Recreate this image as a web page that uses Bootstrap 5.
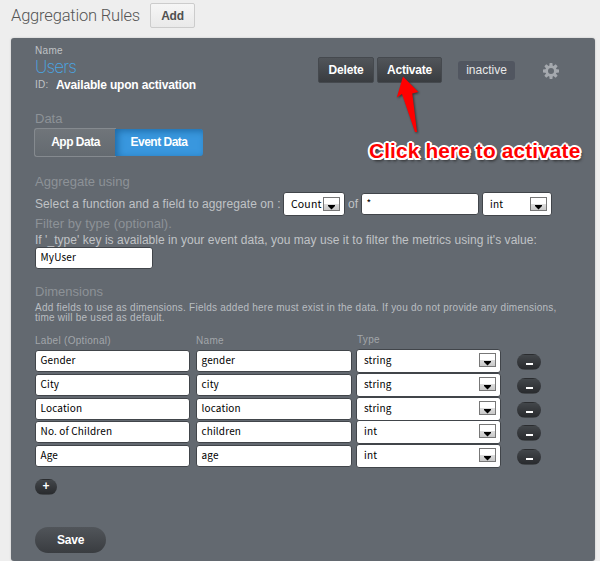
<!DOCTYPE html>
<html lang="en">
<head>
<meta charset="utf-8">
<meta name="viewport" content="width=device-width, initial-scale=1">
<title>Aggregation Rules</title>
<link href="https://cdn.jsdelivr.net/npm/bootstrap@5.3.0/dist/css/bootstrap.min.css" rel="stylesheet">
<style>
body{width:600px;height:561px;overflow:hidden;background:#eee;font:12px/16px "Liberation Sans",Arial,sans-serif;color:#c0c3c6}
.page-head{height:38px;padding-left:11px}
.page-title{font:300 16.5px/20px Roboto,sans-serif;color:#555;width:139px;margin:6px 0 0;white-space:nowrap;letter-spacing:-.18px}
.btn{--bs-btn-font-size:12px;--bs-btn-font-weight:700;--bs-btn-line-height:14px;--bs-btn-padding-x:0;--bs-btn-padding-y:0;--bs-btn-border-radius:2px;letter-spacing:-.2px}
.btn-add{width:45px;height:25px;margin-top:3px;background:linear-gradient(#f6f6f6,#e9e9e9);border:1px solid #ccc;color:#505050}
.panel{width:584px;height:523px;margin-left:11px;padding-left:24px;background:#636970;border-radius:3px;box-shadow:0 0 2px #bbb}
.panel-top{height:70px;padding-top:5px}
.ident{width:283px}
.tiny{font-size:10px;line-height:15px;letter-spacing:.3px}
.rule-name{font:200 17px/18px Inter,sans-serif;color:#49a7e6;height:15px;margin-top:0;letter-spacing:-.8px}
.id-line{margin-top:4px;line-height:16px}
.id-line .tiny{width:21px}
.id-line b{letter-spacing:-.17px}
.btn-dark2{height:26px;margin-top:14px;background:linear-gradient(#51555a,#393c40);border:1px solid #45494e;color:#fff}
.w-del{width:56px}
.w-act{width:65px;margin-left:3px}
.state{width:57px;height:19px;margin:18px 0 0 16px;background:#515660;border-radius:3px;color:#e8e8e8;line-height:18px}
.gear{margin:20px 0 0 28px}
.sect{font-size:13px;line-height:20px;height:20px;color:#8d9297;white-space:nowrap}
.data-title{line-height:22px}
.switch{height:29px;margin-left:-1px}
.seg{width:82px;height:29px;background:linear-gradient(#70757a,#646a70);border:1px solid #858a8f;border-right:0;border-radius:3px 0 0 3px;color:#fff;font-size:12px;letter-spacing:-.5px;font-weight:700;line-height:27px}
.seg-on{width:88px;height:27px;margin-top:1px;background:#3997de;border:0;border-radius:0 3px 3px 0;box-shadow:inset 3px 2px 7px #1f6ca8;line-height:26px;margin-left:-1px}
.agg-title{margin-top:15px}
.agg{height:24px}
.agg-text{width:248px;letter-spacing:.09px}
.of{width:13px;margin-left:3px}
.of+.field{margin-right:3px}
.field,.pick{font:10px/18px "Noto Sans CJK JP",sans-serif;color:#000;background:#fff;border:1px solid #41454a;border-radius:3px;white-space:pre;letter-spacing:.15px}
.field{height:22px;padding-left:4.5px}
.pick{height:24px;padding:0 4px 0 7px}
.pick-count{width:62px;font-size:10.5px}
.pick-int{width:70px}
.drop{width:17px;height:14px;border:1px solid #777;background:linear-gradient(#fff 50%,#ddd 50%,#c8c8c8)}
.drop svg{display:block;margin:7px 0 0 4px}
.w118{width:118px;flex:none}
.filter-title{margin-top:-2px;letter-spacing:.04px}
.filter-text{margin-top:-2px;height:15px;line-height:17px;letter-spacing:.04px}
.dim-title{margin-top:13px}
.desc{margin-top:1px;font-size:10px;line-height:10px;letter-spacing:.24px;white-space:nowrap;color:#b9bdc1}
.cols{color:#a2a6aa;height:16px;margin-top:10px}
.c1{width:161px}
.c3{margin-top:-1px}
.dims{display:grid;grid-template-columns:155px 154px 144px 24px;column-gap:7px;grid-template-rows:repeat(5,23.75px)}
.dims .field{margin-top:1px}
.dims .field:nth-child(4n+2){margin-left:-1px;margin-right:-1px}
.dims .pick{margin-left:-2px;margin-right:1px;padding-bottom:2px}
.pill{width:24px;height:16px;margin:5px 0 0 8px;border-radius:8px;background:linear-gradient(#42464a,#292b2e);color:#fff}
.pill i{width:7px;height:2px;background:#fff;margin-top:4px}
.plus{width:22px;margin:11px 0 0;font-weight:700;line-height:13px}
.save{width:71px;height:26px;border-radius:13px;margin-top:32px;background:linear-gradient(#51555a,#393c40);color:#fff;border:0;padding-top:1px}
.note{left:369px;top:139px;font-size:20.8px;line-height:24px;letter-spacing:.15px;font-weight:700;color:#f00;white-space:nowrap;text-shadow:2px 0 #fff,-2px 0 #fff,0 2px #fff,0 -2px #fff,1.5px 1.5px #fff,-1.5px 1.5px #fff,1.5px -1.5px #fff,-1.5px -1.5px #fff,2px 3px 3px #222}
.arrow{left:390px;top:70px;filter:drop-shadow(1px 1px 1px #333)}
</style>
<script src="https://cdn.jsdelivr.net/npm/bootstrap@5.3.0/dist/js/bootstrap.bundle.min.js"></script>
</head>
<body class="position-relative">
<svg width="0" height="0" class="position-absolute"><defs><path id="tri" d="M0 0H7V1L3.500 4.500L0 1Z"/></defs></svg>
<header class="page-head d-flex">
  <h1 class="page-title">Aggregation Rules</h1>
  <button class="btn btn-add">Add</button>
</header>
<main class="panel">
  <div class="panel-top d-flex align-items-start">
    <div class="ident">
      <div class="tiny">Name</div>
      <div class="rule-name">Users</div>
      <div class="id-line d-flex"><span class="tiny">ID:</span><b class="text-white">Available upon activation</b></div>
    </div>
    <button class="btn btn-dark2 w-del">Delete</button>
    <button class="btn btn-dark2 w-act">Activate</button>
    <span class="state text-center">inactive</span>
    <svg class="gear" width="16" height="16" viewBox="-8 -8 16 16"><g fill="#a5a9ae"><path id="t" d="M-1.400-8H1.400L1.900-4H-1.900Z"/><use href="#t" transform="rotate(45)"/><use href="#t" transform="rotate(90)"/><use href="#t" transform="rotate(135)"/><use href="#t" transform="rotate(180)"/><use href="#t" transform="rotate(225)"/><use href="#t" transform="rotate(270)"/><use href="#t" transform="rotate(315)"/></g><circle r="4.300" fill="none" stroke="#a5a9ae" stroke-width="2.600"/></svg>
  </div>
  <div class="sect data-title">Data</div>
  <div class="switch d-flex text-center"><div class="seg">App Data</div><div class="seg seg-on">Event Data</div></div>
  <div class="sect agg-title">Aggregate using</div>
  <div class="agg d-flex align-items-center">
    <span class="agg-text text-nowrap">Select a function and a field to aggregate on :</span>
    <div class="pick pick-count d-flex align-items-center justify-content-between">Count<span class="drop"><svg width="7" height="5"><use href="#tri"/></svg></span></div>
    <span class="of">of</span>
    <div class="field w118">*</div>
    <div class="pick pick-int d-flex align-items-center justify-content-between">int<span class="drop"><svg width="7" height="5"><use href="#tri"/></svg></span></div>
  </div>
  <div class="sect filter-title">Filter by type (optional).</div>
  <div class="filter-text text-nowrap">If '_type' key is available in your event data, you may use it to filter the metrics using it's value:</div>
  <div class="field w118">MyUser</div>
  <div class="sect dim-title">Dimensions</div>
  <div class="desc">Add fields to use as dimensions. Fields added here must exist in the data. If you do not provide any dimensions,<br>time will be used as default.</div>
  <div class="cols tiny d-flex"><span class="c1">Label (Optional)</span><span class="c1">Name</span><span class="c3">Type</span></div>
  <div class="dims" id="dims"></div>
  <button class="btn pill plus">+</button>
  <div><button class="btn save">Save</button></div>
</main>
<svg class="arrow position-absolute" width="40" height="70"><path fill="#f00" d="M13 6.500L28.300 22L22.300 23.500L27 62H25L12 24L6.800 27.500Z"/></svg>
<div class="note position-absolute">Click here to activate</div>
<script>
const rows=[["Gender","gender","string"],["City","city","string"],["Location","location","string"],["No. of Children","children","int"],["Age","age","int"]];
document.getElementById("dims").innerHTML=rows.map(r=>`<div class="field">${r[0]}</div><div class="field">${r[1]}</div><div class="pick d-flex align-items-center justify-content-between">${r[2]}<span class="drop"><svg width="7" height="5"><use href="#tri"/></svg></span></div><button class="btn pill d-flex align-items-center justify-content-center"><i></i></button>`).join("");
</script>
</body>
</html>
